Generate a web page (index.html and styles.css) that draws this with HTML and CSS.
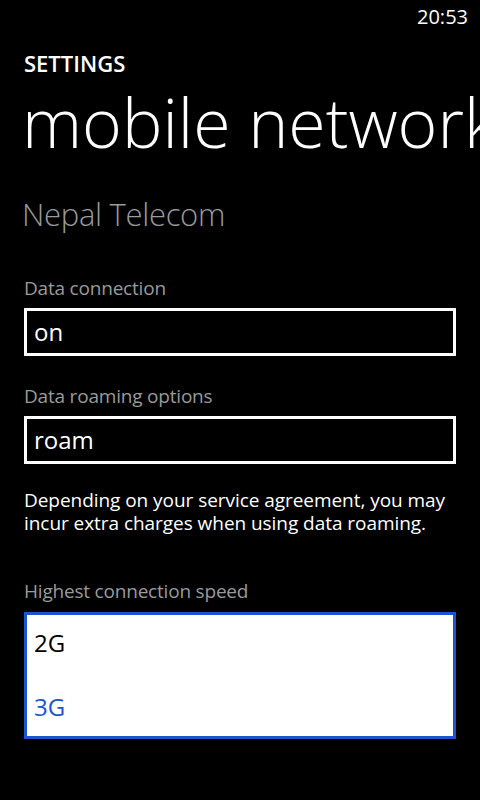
FILE: index.html
```html
<!DOCTYPE html>
<html lang="en">
<head>
<meta charset="utf-8">
<title>mobile network</title>
<link rel="stylesheet" href="styles.css">
</head>
<body>
<div class="phone">
  <div class="status"><span class="time">20:53</span></div>
  <div class="header">
    <div class="app-title">SETTINGS</div>
    <div class="page-title">mobile network</div>
  </div>
  <div class="content">
    <div class="operator">Nepal Telecom</div>
    <div class="label label-first">Data connection</div>
    <div class="picker">on</div>
    <div class="label">Data roaming options</div>
    <div class="picker">roam</div>
    <p class="note">Depending on your service agreement, you may incur extra charges when using data roaming.</p>
    <div class="label label-speed">Highest connection speed</div>
    <div class="picker-open">
      <div class="option">2G</div>
      <div class="option selected">3G</div>
    </div>
  </div>
</div>
</body>
</html>
```
FILE: styles.css
```css
html, body {
  margin: 0;
  padding: 0;
  background: #000;
}
.phone {
  width: 480px;
  height: 800px;
  overflow: hidden;
  background: #000;
  color: #fff;
  font-family: "Open Sans", "Noto Sans", sans-serif;
}
.status {
  height: 34px;
  display: flex;
  justify-content: flex-end;
  padding-right: 12px;
  font-size: 20px;
  line-height: 34px;
}
.header {
  padding-left: 22px;
}
.app-title {
  margin-top: 15px;
  padding-left: 2px;
  font-size: 22px;
  font-weight: 600;
  line-height: 28px;
}
.page-title {
  margin-top: 5px;
  font-size: 68px;
  font-weight: 300;
  line-height: 80px;
  white-space: nowrap;
}
.content {
  padding: 0 24px;
}
.operator {
  margin-top: 32px;
  margin-left: -2px;
  font-size: 31px;
  font-weight: 300;
  line-height: 40px;
  color: #9a9a9a;
  letter-spacing: -0.3px;
}
.label {
  margin-top: 26px;
  font-size: 19px;
  line-height: 28px;
  color: #9a9a9a;
  letter-spacing: -0.2px;
}
.label-first {
  margin-top: 40px;
}
.label-speed {
  margin-top: 42px;
}
.picker {
  margin-top: 6px;
  height: 48px;
  box-sizing: border-box;
  border: 3px solid #fff;
  padding: 0 7px;
  font-size: 24px;
  line-height: 42px;
}
.note {
  margin: 25px 0 0;
  font-size: 19px;
  line-height: 23px;
  letter-spacing: -0.05px;
}
.picker-open {
  margin-top: 7px;
  height: 127px;
  box-sizing: border-box;
  border: 3px solid #1b55d1;
  background: #fff;
  padding: 0 7px;
  display: flex;
  flex-direction: column;
  gap: 8px;
}
.option {
  font-size: 24px;
  line-height: 56px;
  color: #000;
}
.option.selected {
  color: #1b55d1;
}
```
